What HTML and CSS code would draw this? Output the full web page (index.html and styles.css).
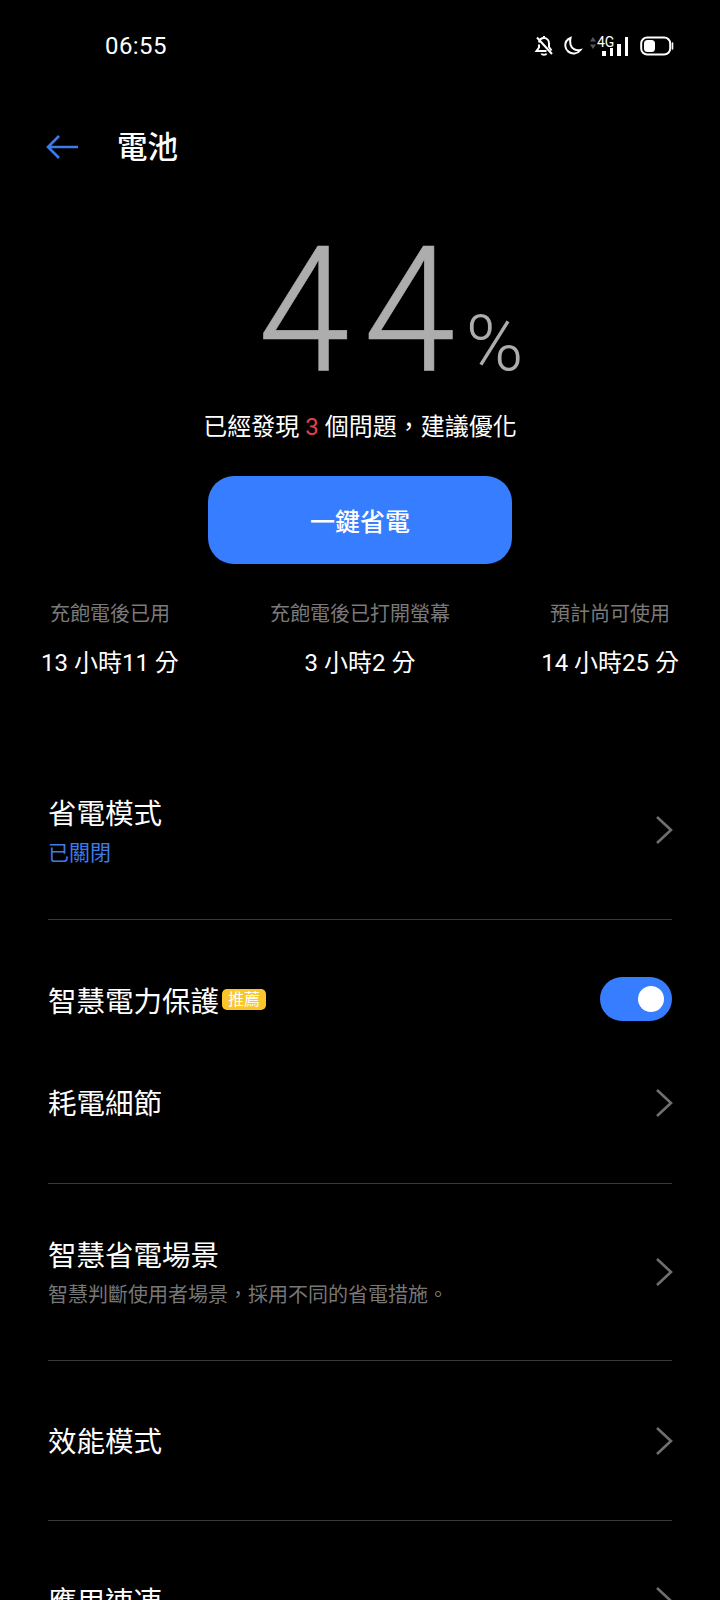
FILE: index.html
```html
<!DOCTYPE html>
<html lang="zh-Hant">
<head>
    <meta charset="UTF-8">
    <meta name="viewport" content="width=device-width, initial-scale=1.0">
    <title>電池</title>
    <link rel="stylesheet" href="styles.css">
</head>
<body>
    <div class="status-bar">
        <span class="time">06:55</span>
        <div class="status-icons">
            <svg class="icon-bell" width="20" height="22" viewBox="0 0 20 22" fill="none" stroke="#fff" stroke-width="2">
                <path d="M5 7.500C5.500 4.500 7.500 3 10 3C13 3 15 5.500 15 8.500V12L17.500 15.500M12.500 16H2.500L5 12.500V9.500"/>
                <path d="M7.500 18.500C8 20.300 12 20.300 12.500 18.500"/>
                <path d="M10 1V3M3 2.500L18 19"/>
            </svg>
            <svg class="icon-moon" width="20" height="20" viewBox="0 0 20 20" fill="none" stroke="#fff" stroke-width="2">
                <path d="M7.500 2C4 3.500 2 6.500 2.300 10C2.700 14.500 7 18 11.500 17.500C14 17.200 16 16 17.500 14C12.500 15 8.500 12.500 7.500 8.500C7 6 7 4 7.500 2Z"/>
            </svg>
            <div class="signal">
                <svg class="updown" width="6" height="14" viewBox="0 0 6 14" fill="#555">
                    <path d="M3 1L6 5.500H0ZM3 13L0 8.500H6Z"/>
                </svg>
                <span class="net">4G</span>
                <div class="bars">
                    <i class="bar b1"></i><i class="bar b2"></i><i class="bar b3"></i><i class="bar b4"></i>
                </div>
            </div>
            <svg class="icon-battery" width="34" height="20" viewBox="0 0 34 20" fill="none">
                <rect x="1.200" y="1.500" width="29" height="17" rx="6" stroke="#fff" stroke-width="2"/>
                <rect x="4" y="4" width="11" height="12" rx="3.500" fill="#fff"/>
                <path d="M32.500 7V13" stroke="#fff" stroke-width="1.600" stroke-linecap="round"/>
            </svg>
        </div>
    </div>

    <header class="title-bar">
        <svg class="back" width="32" height="24" viewBox="0 0 32 24" fill="none" stroke="#3d7bea" stroke-width="2.600">
            <path d="M13 1L2 12L13 23M2 12H32"/>
        </svg>
        <h1>電池</h1>
    </header>

    <section class="summary">
        <div class="level"><span class="num"><span class="digit">4</span>4</span><span class="pct">%</span></div>
        <p class="notice">已經發現 <span class="red">3</span> 個問題，建議優化</p>
        <button class="save-btn" type="button">一鍵省電</button>
    </section>

    <section class="stats">
        <div class="stat">
            <div class="stat-label">充飽電後已用</div>
            <div class="stat-value">13 小時11 分</div>
        </div>
        <div class="stat">
            <div class="stat-label">充飽電後已打開螢幕</div>
            <div class="stat-value">3 小時2 分</div>
        </div>
        <div class="stat">
            <div class="stat-label">預計尚可使用</div>
            <div class="stat-value">14 小時25 分</div>
        </div>
    </section>

    <ul class="menu">
        <li class="row row-saver line">
            <div>
                <div class="row-title">省電模式</div>
                <div class="row-sub blue">已關閉</div>
            </div>
            <svg class="chevron" width="18" height="30" viewBox="0 0 18 30" fill="none" stroke="#6f6f6f" stroke-width="2.600"><path d="M2 2L16 15L2 28"/></svg>
        </li>
        <li class="row row-protect">
            <div class="row-title">智慧電力保護<span class="tag">推薦</span></div>
            <div class="switch"><span class="knob"></span></div>
        </li>
        <li class="row row-detail line">
            <div class="row-title">耗電細節</div>
            <svg class="chevron" width="18" height="30" viewBox="0 0 18 30" fill="none" stroke="#6f6f6f" stroke-width="2.600"><path d="M2 2L16 15L2 28"/></svg>
        </li>
        <li class="row row-scene line">
            <div>
                <div class="row-title">智慧省電場景</div>
                <div class="row-sub">智慧判斷使用者場景，採用不同的省電措施。</div>
            </div>
            <svg class="chevron" width="18" height="30" viewBox="0 0 18 30" fill="none" stroke="#6f6f6f" stroke-width="2.600"><path d="M2 2L16 15L2 28"/></svg>
        </li>
        <li class="row row-perf line">
            <div class="row-title">效能模式</div>
            <svg class="chevron" width="18" height="30" viewBox="0 0 18 30" fill="none" stroke="#6f6f6f" stroke-width="2.600"><path d="M2 2L16 15L2 28"/></svg>
        </li>
        <li class="row row-freeze">
            <div class="row-title">應用速凍</div>
            <svg class="chevron" width="18" height="30" viewBox="0 0 18 30" fill="none" stroke="#6f6f6f" stroke-width="2.600"><path d="M2 2L16 15L2 28"/></svg>
        </li>
    </ul>
</body>
</html>
```

FILE: styles.css
```css
* {
    box-sizing: border-box;
}
html, body {
    height: 1600px;
    overflow: hidden;
}
body {
    margin: 0;
    background-color: #000;
    color: #fff;
    font-family: Roboto, "Noto Sans CJK TC", sans-serif;
}
.status-bar {
    height: 92px;
    padding: 0 46px 0 105px;
    display: flex;
    align-items: center;
    justify-content: space-between;
}
.time {
    font-size: 24px;
    letter-spacing: 0.4px;
}
.status-icons {
    display: flex;
    align-items: center;
    gap: 9px;
}
.signal {
    height: 20px;
    margin-left: -2px;
    margin-top: -1px;
    position: relative;
    width: 38px;
}
.updown {
    position: absolute;
    left: 0;
    top: 0;
}
.net {
    position: absolute;
    left: 7px;
    top: -1px;
    font-size: 14px;
    line-height: 14px;
}
.bars {
    position: absolute;
    right: 0;
    bottom: 0;
    display: flex;
    align-items: flex-end;
    gap: 4px;
}
.bar {
    display: block;
    width: 3.500px;
    background: #fff;
}
.b1 { height: 5px; }
.b2 { height: 8px; }
.b3 { height: 12px; }
.b4 { height: 19px; }
.icon-battery {
    margin-left: 3px;
}
.title-bar {
    height: 110px;
    padding-left: 46px;
    display: flex;
    align-items: center;
}
h1 {
    margin: -4px 0 0 39px;
    font-size: 30.500px;
    font-weight: 500;
}
.summary {
    display: flex;
    flex-direction: column;
    align-items: center;
}
.level {
    align-self: flex-start;
    margin-top: 23px;
    margin-left: 258px;
    height: 172px;
    display: flex;
    align-items: baseline;
    color: #adadad;
    font-weight: 300;
    line-height: 172px;
}
.num {
    display: inline-block;
    font-size: 174px;
    -webkit-text-stroke: 0.6px #adadad;
    transform: scaleX(0.95);
    transform-origin: left;
}
.digit {
    letter-spacing: 14.600px;
}
.pct {
    font-size: 78px;
    margin-left: 0;
}
.notice {
    margin: 13px 0 0;
    font-size: 24px;
    line-height: 34px;
}
.red {
    color: #e0434f;
}
.save-btn {
    margin-top: 32px;
    width: 304px;
    height: 88px;
    border: none;
    border-radius: 26px;
    background-color: #377dff;
    color: #fff;
    font-family: inherit;
    font-size: 25px;
    font-weight: 500;
}
.stats {
    margin-top: 33px;
    padding: 0 41px;
    display: flex;
    justify-content: space-between;
    text-align: center;
}
.stat-label {
    font-size: 20px;
    line-height: 34px;
    color: #7a7a7a;
}
.stat-value {
    margin-top: 15px;
    font-size: 24px;
    line-height: 34px;
}
.menu {
    list-style: none;
    margin: 0;
    padding: 0 48px;
}
.row {
    display: flex;
    align-items: center;
    justify-content: space-between;
}
.line {
    border-bottom: 1px solid #3a3a3a;
}
.row-title {
    font-size: 28.500px;
    line-height: 40px;
    padding-top: 4px;
    display: flex;
    align-items: center;
}
.row-sub {
    font-size: 20px;
    line-height: 30px;
    margin-top: 3px;
    color: #777;
}
.blue {
    color: #3d7bea;
    font-size: 21px;
}
.chevron {
    flex: none;
    margin-right: -1px;
}
.row-saver {
    margin-top: 64px;
    height: 176px;
}
.row-saver .row-title {
    padding-top: 0;
}
.row-saver .chevron {
    margin-bottom: 4px;
}
.row-protect {
    padding-top: 55px;
}
.row-protect .row-title {
    padding-top: 8px;
}
.row-detail {
    height: 161px;
}
.row-scene {
    height: 177px;
}
.row-scene .row-title {
    padding-top: 2px;
}
.row-perf {
    height: 160px;
}
.row-freeze {
    height: 160px;
}
.tag {
    margin: -8px 0 0 3px;
    height: 21px;
    padding: 0 6px;
    border-radius: 5px;
    background-color: #f9c62c;
    color: #fff;
    font-size: 16px;
    line-height: 21px;
}
.switch {
    width: 72px;
    height: 44px;
    border-radius: 22px;
    background-color: #377dff;
    display: flex;
    align-items: center;
    justify-content: flex-end;
    padding-right: 8px;
}
.knob {
    width: 26px;
    height: 26px;
    border-radius: 50%;
    background-color: #fff;
}
```
